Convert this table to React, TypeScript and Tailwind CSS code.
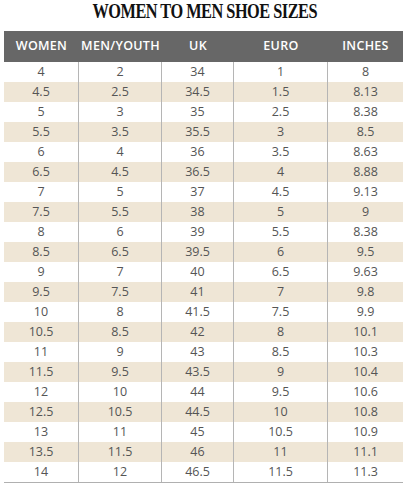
import React from "react";

const rows: string[][] = [
  ["4", "2", "34", "1", "8"],
  ["4.5", "2.5", "34.5", "1.5", "8.13"],
  ["5", "3", "35", "2.5", "8.38"],
  ["5.5", "3.5", "35.5", "3", "8.5"],
  ["6", "4", "36", "3.5", "8.63"],
  ["6.5", "4.5", "36.5", "4", "8.88"],
  ["7", "5", "37", "4.5", "9.13"],
  ["7.5", "5.5", "38", "5", "9"],
  ["8", "6", "39", "5.5", "8.38"],
  ["8.5", "6.5", "39.5", "6", "9.5"],
  ["9", "7", "40", "6.5", "9.63"],
  ["9.5", "7.5", "41", "7", "9.8"],
  ["10", "8", "41.5", "7.5", "9.9"],
  ["10.5", "8.5", "42", "8", "10.1"],
  ["11", "9", "43", "8.5", "10.3"],
  ["11.5", "9.5", "43.5", "9", "10.4"],
  ["12", "10", "44", "9.5", "10.6"],
  ["12.5", "10.5", "44.5", "10", "10.8"],
  ["13", "11", "45", "10.5", "10.9"],
  ["13.5", "11.5", "46", "11", "11.1"],
  ["14", "12", "46.5", "11.5", "11.3"],
];

const headers = ["WOMEN", "MEN/YOUTH", "UK", "EURO", "INCHES"];

export default function App() {
  return (
    <div className="w-[409px] h-[488px] bg-white overflow-hidden">
      <div className="h-[31px] flex justify-center">
        <h1
          className="text-[20px] leading-[22px] font-bold text-[#111] tracking-[-0.6px] scale-x-[0.815] whitespace-nowrap"
          style={{ fontFamily: '"Liberation Serif", serif' }}
        >
          WOMEN TO MEN SHOE SIZES
        </h1>
      </div>
      <div
        className="ml-[4px] w-[399px] border-b border-[#b0b0b0]"
        style={{ fontFamily: '"Open Sans", sans-serif' }}
      >
        <div className="grid grid-cols-[75px_83px_72px_94px_75px] h-[31px] bg-[#676767] text-white text-[12.5px] font-semibold">
          {headers.map((h) => (
            <div key={h} className="flex items-center justify-center tracking-[0.3px]">
              {h}
            </div>
          ))}
        </div>
        {rows.map((r, i) => (
          <div
            key={i}
            className={
              "grid grid-cols-[75px_83px_72px_94px_75px] h-[20px] text-[12.5px] font-medium text-[#555] " +
              (i % 2 === 1 ? "bg-[#efe6d6]" : "bg-white")
            }
          >
            {r.map((c, j) => (
              <div
                key={j}
                className={
                  "flex items-center justify-center " +
                  (j < 4 ? "border-r border-[#b5b5b5]" : "")
                }
              >
                {c}
              </div>
            ))}
          </div>
        ))}
      </div>
    </div>
  );
}
